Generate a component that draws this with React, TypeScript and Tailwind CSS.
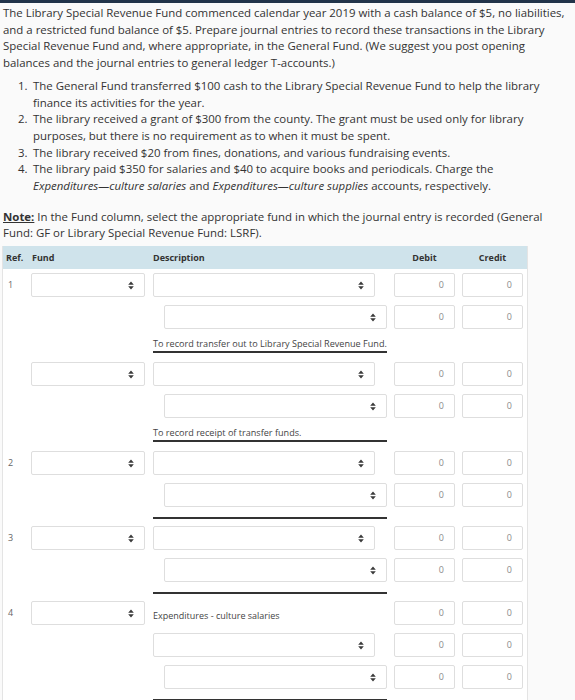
import React from 'react';

type Row = { fund?: boolean; desc: 'select' | 'indent' | string };
type Entry = { ref: string; rows: Row[]; memo: string };

const entries: Entry[] = [
  { ref: '1', rows: [{ fund: true, desc: 'select' }, { desc: 'indent' }], memo: 'To record transfer out to Library Special Revenue Fund.' },
  { ref: '', rows: [{ fund: true, desc: 'select' }, { desc: 'indent' }], memo: 'To record receipt of transfer funds.' },
  { ref: '2', rows: [{ fund: true, desc: 'select' }, { desc: 'indent' }], memo: '' },
  { ref: '3', rows: [{ fund: true, desc: 'select' }, { desc: 'indent' }], memo: '' },
  {
    ref: '4',
    rows: [{ fund: true, desc: 'Expenditures - culture salaries' }, { desc: 'select' }, { desc: 'indent' }],
    memo: '',
  },
];

const Arrows = () => (
  <svg width="6" height="9" viewBox="0 0 6 9" className="shrink-0">
    <path d="M3 0.5 L5.8 3.8 H0.2 Z M3 8.5 L0.2 5.2 H5.8 Z" fill="#3a3a3a" />
  </svg>
);

const Select = ({ className = '' }: { className?: string }) => (
  <div className={`flex h-6 items-center justify-end rounded-[2px] border border-[#dedede] bg-white pr-[10px] ${className}`}>
    <Arrows />
  </div>
);

const Amount = () => (
  <div className="flex h-6 w-[61px] items-center justify-end rounded-[2px] border border-[#dedede] bg-white pr-[10px] text-[9px] text-[#8a8a8a]">
    0
  </div>
);

const JournalRow = ({ ref_, row, first }: { ref_: string; row: Row; first: boolean }) => (
  <div className="flex h-6 items-center">
    <div className="w-[28px] pl-[5px] text-[9px] text-[#666]">{first ? ref_ : ''}</div>
    <div className="w-[114px]">{row.fund && <Select />}</div>
    <div className="ml-2 w-[234px]">
      {row.desc === 'select' && <Select className="w-[222px]" />}
      {row.desc === 'indent' && <Select className="ml-[11px] w-[223px]" />}
      {row.desc !== 'select' && row.desc !== 'indent' && (
        <span className="text-[9px] text-[#444]">{row.desc}</span>
      )}
    </div>
    <div className="ml-[7px]">
      <Amount />
    </div>
    <div className="ml-[7px]">
      <Amount />
    </div>
  </div>
);

const App: React.FC = () => {
  return (
    <div className="min-h-screen border-t-[3px] border-[#22344a] bg-[#fafafa] font-['Open_Sans',sans-serif] text-[#333]">
      <div className="w-[568px] pl-[3px] pt-[2px] text-[11.45px] leading-[16.7px]">
        <p>
          The Library Special Revenue Fund commenced calendar year 2019 with a cash balance of $5, no liabilities,
          and a restricted fund balance of $5. Prepare journal entries to record these transactions in the Library
          Special Revenue Fund and, where appropriate, in the General Fund. (We suggest you post opening balances
          and the journal entries to general ledger T-accounts.)
        </p>
        <ol className="mt-[6px] ml-[15px] w-[527px]">
          <li className="flex">
            <span className="w-[15px] shrink-0">1.</span>
            <span>
              The General Fund transferred $100 cash to the Library Special Revenue Fund to help the library finance
              its activities for the year.
            </span>
          </li>
          <li className="flex">
            <span className="w-[15px] shrink-0">2.</span>
            <span>
              The library received a grant of $300 from the county. The grant must be used only for library purposes,
              but there is no requirement as to when it must be spent.
            </span>
          </li>
          <li className="flex">
            <span className="w-[15px] shrink-0">3.</span>
            <span>The library received $20 from fines, donations, and various fundraising events.</span>
          </li>
          <li className="flex">
            <span className="w-[15px] shrink-0">4.</span>
            <span>
              The library paid $350 for salaries and $40 to acquire books and periodicals. Charge the{' '}
              <i>Expenditures—culture salaries</i> and <i>Expenditures—culture supplies</i> accounts, respectively.
            </span>
          </li>
        </ol>
        <p className="mt-[14px]">
          <b className="underline">Note:</b> In the Fund column, select the appropriate fund in which the journal
          entry is recorded (General Fund: GF or Library Special Revenue Fund: LSRF).
        </p>
      </div>

      <div className="ml-[2px] mt-[4px] w-[526px] border-x border-[#e4e4e4] bg-white">
        <div className="flex h-[23px] items-center bg-[#cfe3eb] text-[9px] font-bold text-[#333]">
          <div className="w-[28px] pl-[3px]">Ref.</div>
          <div className="w-[114px] pl-px">Fund</div>
          <div className="ml-2 w-[234px]">Description</div>
          <div className="ml-[7px] w-[61px] text-center">Debit</div>
          <div className="ml-[7px] w-[61px] text-center">Credit</div>
        </div>
        <div className="pt-1">
          {entries.map((entry, i) => (
            <div key={i}>
              <div className="flex flex-col gap-2">
                {entry.rows.map((row, j) => (
                  <JournalRow key={j} ref_={entry.ref} row={row} first={j === 0} />
                ))}
              </div>
              {entry.memo ? (
                <div className="mb-[9px] ml-[150px] mt-[7px] w-[234px] border-b-2 border-[#333] text-[9.1px] leading-[15px] text-[#444]">
                  {entry.memo}
                </div>
              ) : (
                <div className="mb-[7px] ml-[150px] mt-[10px] w-[234px] border-b-2 border-[#333]" />
              )}
            </div>
          ))}
        </div>
      </div>
    </div>
  );
};

export default App;
